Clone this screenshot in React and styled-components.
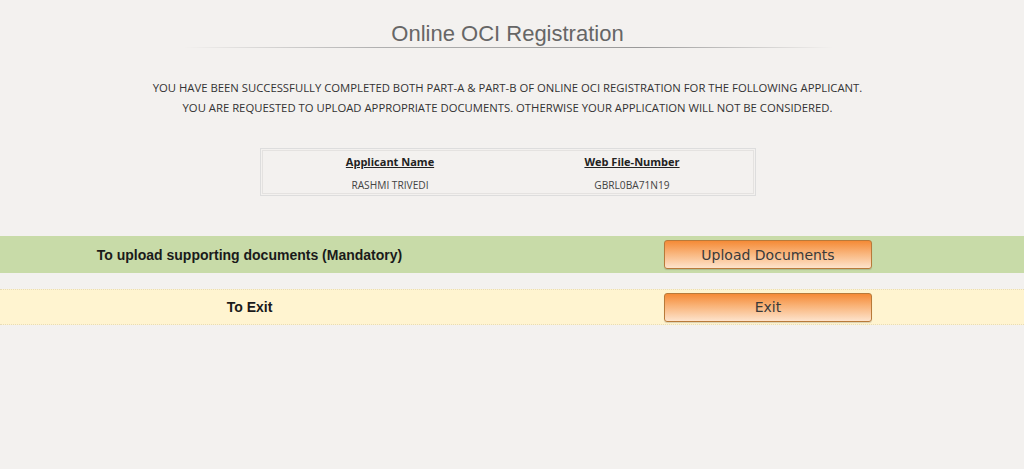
import React from "react";
import styled, { createGlobalStyle } from "styled-components";

const GlobalStyle = createGlobalStyle`
  html, body {
    margin: 0;
    padding: 0;
    background: #f3f1ef;
  }
  body {
    font-family: "Open Sans", "Liberation Sans", Arial, sans-serif;
    color: #333;
  }
`;

const Page = styled.div`
  width: 1024px;
  height: 469px;
  overflow: hidden;
  padding-top: 21px;
  box-sizing: border-box;
`;

const Header = styled.div`
  padding-right: 9px;
`;

const Title = styled.h1`
  margin: 0 auto;
  width: 650px;
  text-align: center;
  font-family: "Liberation Sans", Arial, sans-serif;
  font-weight: normal;
  font-size: 22px;
  line-height: 26px;
  color: #666;
  &::after {
    content: "";
    display: block;
    height: 1px;
    background: linear-gradient(to right, rgba(160,160,160,0) 0%, #b0b0b0 30%, #999 70%, rgba(160,160,160,0) 100%);
  }
`;

const Notice = styled.div`
  margin-top: 30px;
  text-align: center;
  font-size: 11.3px;
  line-height: 19.5px;
  color: #333;
`;

const InfoTable = styled.table`
  margin: 31px 0 0 260px;
  width: 496px;
  border: 1px solid #ddd;
  border-spacing: 1px;
  box-sizing: border-box;
`;

const InnerCell = styled.td`
  border: 1px solid #e4e2e0;
  padding: 0;
`;

const Grid = styled.div`
  display: grid;
  grid-template-columns: 1fr 1fr;
  padding: 3px 0 1px 6px;
`;

const Head = styled.div`
  text-align: center;
  font-size: 11px;
  font-weight: 700;
  text-decoration: underline;
  line-height: 16px;
  color: #222;
`;

const Value = styled.div`
  text-align: center;
  font-size: 10.2px;
  line-height: 14px;
  margin-top: 8px;
  color: #444;
`;

const ActionRow = styled.div`
  display: grid;
  grid-template-columns: 1fr 1fr;
  align-items: center;
  height: ${(p) => p.$h}px;
  margin-top: ${(p) => p.$top}px;
  background: ${(p) => p.$bg};
  border-top: ${(p) => (p.$dotted ? "1px dotted #e8dcb6" : "none")};
  border-bottom: ${(p) => (p.$dotted ? "1px dotted #e8dcb6" : "none")};
  box-sizing: border-box;
`;

const Label = styled.div`
  text-align: center;
  padding-right: 13px;
  font-family: "Liberation Sans", Arial, sans-serif;
  font-weight: 700;
  font-size: 14px;
  color: #1a1a1a;
`;

const ButtonCell = styled.div`
  display: flex;
  justify-content: center;
`;

const OrangeButton = styled.button`
  width: 208px;
  height: 29px;
  border: 1px solid #b87a3a;
  border-radius: 3px;
  background: linear-gradient(to bottom, #f58a36 0%, #f9b47a 45%, #fde3cc 100%);
  font-family: "DejaVu Sans", Verdana, sans-serif;
  font-size: 14px;
  color: #3a3a3a;
  cursor: pointer;
  padding: 0;
  box-shadow: 0 1px 1px rgba(0, 0, 0, 0.15);
`;

export default function App() {
  return (
    <>
      <GlobalStyle />
      <Page>
        <Header>
          <Title>Online OCI Registration</Title>
          <Notice>
            YOU HAVE BEEN SUCCESSFULLY COMPLETED BOTH PART-A &amp; PART-B OF ONLINE OCI REGISTRATION FOR THE FOLLOWING APPLICANT.
            <br />
            YOU ARE REQUESTED TO UPLOAD APPROPRIATE DOCUMENTS. OTHERWISE YOUR APPLICATION WILL NOT BE CONSIDERED.
          </Notice>
        </Header>
        <InfoTable>
          <tbody>
            <tr>
              <InnerCell>
                <Grid>
                  <Head>Applicant Name</Head>
                  <Head>Web File-Number</Head>
                  <Value>RASHMI TRIVEDI</Value>
                  <Value>GBRL0BA71N19</Value>
                </Grid>
              </InnerCell>
            </tr>
          </tbody>
        </InfoTable>
        <ActionRow $top={40} $h={37} $bg="#c8dba8">
          <Label>To upload supporting documents (Mandatory)</Label>
          <ButtonCell>
            <OrangeButton>Upload Documents</OrangeButton>
          </ButtonCell>
        </ActionRow>
        <ActionRow $top={16} $h={36} $bg="#fff4d0" $dotted>
          <Label>To Exit</Label>
          <ButtonCell>
            <OrangeButton>Exit</OrangeButton>
          </ButtonCell>
        </ActionRow>
      </Page>
    </>
  );
}
